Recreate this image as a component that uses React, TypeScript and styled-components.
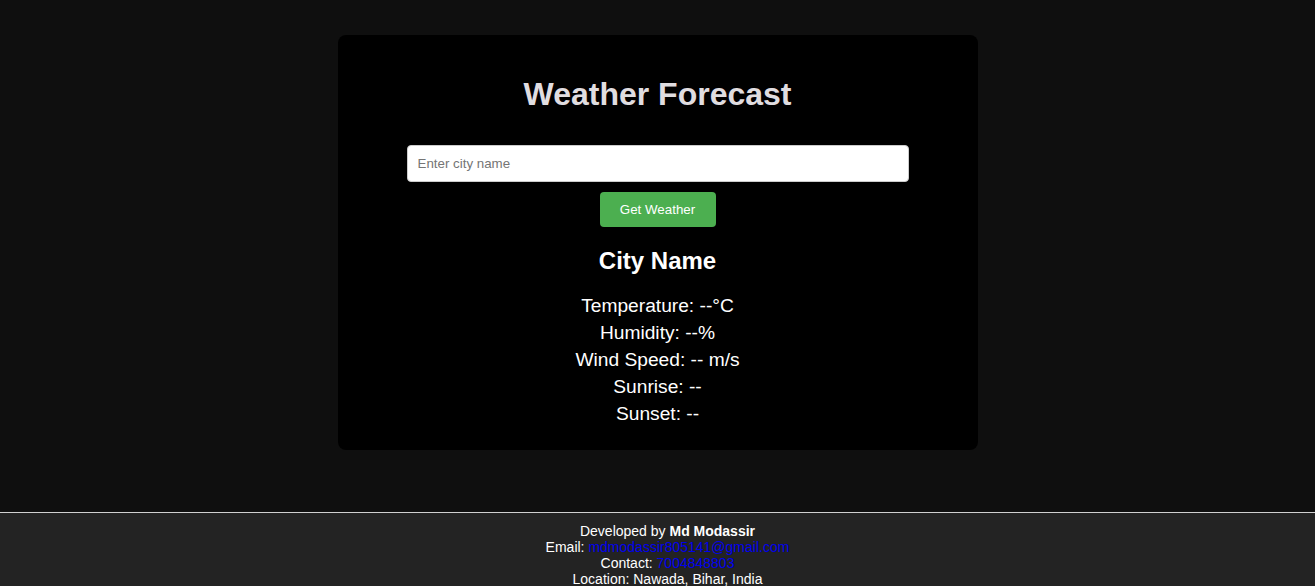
import React from "react";
import styled, { createGlobalStyle } from "styled-components";

const GlobalStyle = createGlobalStyle`
  html, body {
    margin: 0;
    padding: 0;
    background: #0f0f0f;
    font-family: "Liberation Sans", Arial, sans-serif;
    color: #ffffff;
    overflow-x: hidden;
  }
`;

const Page = styled.div`
  display: flex;
  flex-direction: column;
  align-items: stretch;
`;

const Main = styled.main`
  display: flex;
  justify-content: center;
  padding: 35px 0 62px;
`;

const Card = styled.section`
  width: 640px;
  box-sizing: border-box;
  background: #000000;
  border-radius: 8px;
  padding: 41px 20px 23px;
  display: flex;
  flex-direction: column;
  align-items: center;
  text-align: center;
`;

const Title = styled.h1`
  margin: 0 0 32px;
  font-size: 32px;
  line-height: 37px;
  font-weight: bold;
  color: #e0dde0;
`;

const CityInput = styled.input`
  width: 480px;
  padding: 10px;
  border: 1px solid #cccccc;
  border-radius: 4px;
  background: #ffffff;
  font-family: "Liberation Sans", Arial, sans-serif;
  font-size: 13.33px;
  line-height: 15px;
  color: #000;
  outline: none;
  &::placeholder {
    color: #757575;
  }
`;

const Button = styled.button`
  margin-top: 10px;
  width: 116px;
  height: 35px;
  padding: 0;
  border: none;
  border-radius: 4px;
  background: #4caf50;
  color: #ffffff;
  font-family: "Liberation Sans", Arial, sans-serif;
  font-size: 13.33px;
  cursor: pointer;
`;

const CityName = styled.h2`
  margin: 20px 0 17px;
  font-size: 24px;
  line-height: 28px;
  font-weight: bold;
  color: #ffffff;
`;

const InfoLine = styled.p`
  margin: 0;
  font-size: 19.2px;
  line-height: 27px;
  color: #ffffff;
`;

const Footer = styled.footer`
  width: 100%;
  box-sizing: content-box;
  border-top: 1px solid #d0d0d0;
  background: #232323;
  padding: 10px;
  text-align: center;
  font-size: 14px;
  line-height: 16px;
  color: #ffffff;
`;

const FooterLine = styled.div``;

const FooterLink = styled.a`
  color: #0000ee;
  text-decoration: none;
`;

export default function App() {
  return (
    <>
      <GlobalStyle />
      <Page>
        <Main>
          <Card>
            <Title>Weather Forecast</Title>
            <CityInput type="text" placeholder="Enter city name" />
            <Button>Get Weather</Button>
            <CityName>City Name</CityName>
            <InfoLine>Temperature: --°C</InfoLine>
            <InfoLine>Humidity: --%</InfoLine>
            <InfoLine>Wind Speed: -- m/s</InfoLine>
            <InfoLine>Sunrise: --</InfoLine>
            <InfoLine>Sunset: --</InfoLine>
          </Card>
        </Main>
        <Footer>
          <FooterLine>
            Developed by <strong>Md Modassir</strong>
          </FooterLine>
          <FooterLine>
            Email: <FooterLink href="#">mdmodassir805141@gmail.com</FooterLink>
          </FooterLine>
          <FooterLine>
            Contact: <FooterLink href="#">7004848803</FooterLink>
          </FooterLine>
          <FooterLine>Location: Nawada, Bihar, India</FooterLine>
        </Footer>
      </Page>
    </>
  );
}
